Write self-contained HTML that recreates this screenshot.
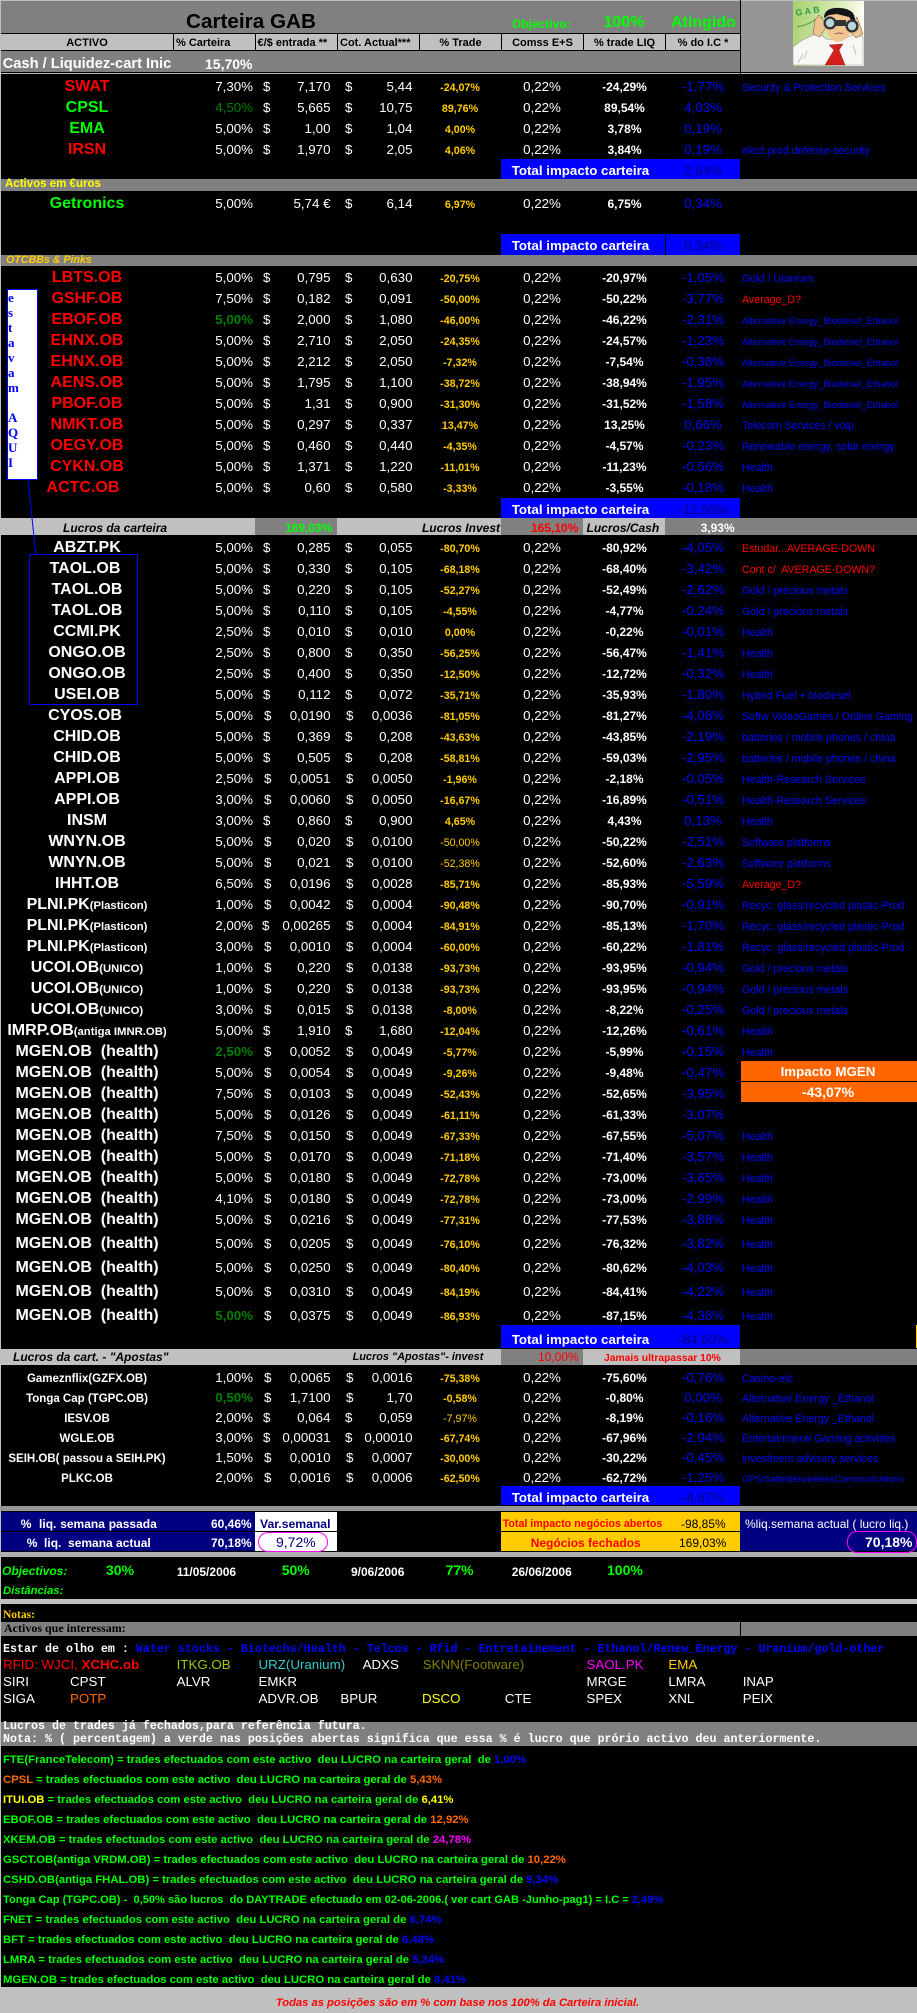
<!DOCTYPE html>
<html><head><meta charset="utf-8"><title>Carteira GAB</title>
<style>
html,body{margin:0;padding:0}
body{position:relative;width:917px;height:2010px;background:#c0c0c0;overflow:hidden;font-family:"Liberation Sans",Arial,sans-serif;color:#fff}
.a{position:absolute}
.t{position:absolute;white-space:pre;line-height:20px}
.c{text-align:center}
.bd{font-weight:bold}
.r{position:absolute;left:0;width:917px;display:grid;grid-template-columns:174px 79px 19px 58.5px 24.5px 57.5px 95px 69px 96px 61px 183.5px;align-items:baseline;padding-top:3px;white-space:pre}
.r i{font-style:normal;font-size:13.33px;line-height:16px;display:block;position:relative}
.r i:nth-child(1){font-size:16px;font-weight:bold;text-align:center}
.r i:nth-child(2),.r i:nth-child(4),.r i:nth-child(6){text-align:right}
.r i:nth-child(3){padding-left:10px}
.r i:nth-child(5){padding-left:14.5px}
.w i:nth-child(3){padding-left:11px}
.w i:nth-child(5){padding-left:15.5px}
.r i:nth-child(7){font-size:10.67px;font-weight:bold;color:#fc0;text-align:center}
.r i:nth-child(8){text-align:center}
.r i:nth-child(9){font-size:12px;font-weight:bold;text-align:center}
.r i:nth-child(10){color:#00f;text-align:center}
.r i:nth-child(11){font-size:10.67px;color:#00f;padding-left:8.5px}
.r i.R{color:#f00}
.r i.G{color:#0f0}
.r i.g{color:#008000;font-weight:bold}
.r i.gn{color:#008000}
.r i.q{color:#f00}
.r i.n9{font-size:9.33px}
.r i.nb{font-weight:normal}
.r small{font-size:11.3px}
.s{padding-top:4px}
.s i:nth-child(1){font-size:11.5px}
.tl{left:511.7px;font-size:13.33px;font-weight:bold;color:#fff}
.tv{left:666px;width:74px;text-align:center;font-size:13.33px;color:#000080}
.h{font-size:11px;font-weight:bold;color:#000;top:33px}
.lc{font-size:12px;font-weight:bold;font-style:italic;color:#000}
.sym{font-size:13.33px}
.m{font-family:"Liberation Mono",monospace;font-size:11.67px;font-weight:bold}
.gl{left:3px;font-size:11.3px;font-weight:bold;color:#0f0}
.b{color:#00f}.o{color:#f60}.y{color:#ff0}.p{color:#f0f}
</style></head><body>

<!-- top header -->
<div class="a" style="left:1px;top:1px;width:739px;height:71px;background:#808080"></div>
<div class="a" style="left:741px;top:1px;width:176px;height:71px;background:#969696"></div>
<div class="a" style="left:1px;top:34px;width:739px;height:16px;background:#c0c0c0"></div>
<div class="a" style="left:1px;top:33px;width:739px;height:1px;background:#000"></div>
<div class="a" style="left:1px;top:50px;width:739px;height:1px;background:#000"></div>
<div class="a" style="left:173px;top:34px;width:1px;height:16px;background:#000"></div>
<div class="a" style="left:255px;top:34px;width:1px;height:16px;background:#000"></div>
<div class="a" style="left:337px;top:34px;width:1px;height:16px;background:#000"></div>
<div class="a" style="left:419px;top:34px;width:1px;height:16px;background:#000"></div>
<div class="a" style="left:501px;top:34px;width:1px;height:16px;background:#000"></div>
<div class="a" style="left:583px;top:34px;width:1px;height:16px;background:#000"></div>
<div class="a" style="left:665px;top:34px;width:1px;height:16px;background:#000"></div>
<div class="a" style="left:740px;top:0;width:1px;height:74px;background:#000"></div>
<div class="a" style="left:1px;top:72px;width:916px;height:1px;background:#000"></div>
<div class="a" style="left:1px;top:74px;width:916px;height:1913px;background:#000"></div>

<div class="t bd" style="left:186px;top:12px;font-size:20.7px;color:#000">Carteira GAB</div>
<div class="t bd" style="left:512px;top:14px;font-size:12px;color:#0f0">Objectivo:</div>
<div class="t bd" style="left:603.5px;top:12.5px;font-size:16px;color:#0f0">100%</div>
<div class="t bd" style="left:671px;top:12.5px;font-size:16px;color:#0f0">Atingido</div>

<div class="t h c" style="left:1px;width:172px">ACTIVO</div>
<div class="t h" style="left:176px">% Carteira</div>
<div class="t h" style="left:257.5px">€/$ entrada **</div>
<div class="t h" style="left:340px">Cot. Actual***</div>
<div class="t h c" style="left:420px;width:81px">% Trade</div>
<div class="t h c" style="left:502px;width:81px">Comss E+S</div>
<div class="t h c" style="left:584px;width:81px">% trade LIQ</div>
<div class="t h c" style="left:666px;width:74px">% do I.C *</div>

<div class="t bd" style="left:2.7px;top:54px;font-size:14.67px">Cash / Liquidez-cart Inic</div>
<div class="t bd" style="left:205px;top:54px;font-size:14px">15,70%</div>

<!-- portrait -->
<svg class="a" style="left:793px;top:1px" width="71" height="65" viewBox="0 0 71 65">
<defs><linearGradient id="bg" x1="0" y1="0" x2="1" y2="0.2"><stop offset="0" stop-color="#a6cf6c"/><stop offset="0.6" stop-color="#d6eab0"/><stop offset="1" stop-color="#fdfdf5"/></linearGradient></defs>
<rect width="71" height="65" fill="url(#bg)"/>
<text x="3" y="15" font-family="Liberation Sans,sans-serif" font-size="9" font-weight="bold" fill="#2f9a45" transform="rotate(-9 3 15)">G A B</text>
<path d="M4 26Q14 24 20 20T30 17" fill="none" stroke="#3aa04a" stroke-width="1"/>
<path d="M0 64V46L8 40 20 34 27 33 33 38 48 40 55 36 62 33 70 36V64Z" fill="#f7f7f4" stroke="#9b9b96" stroke-width=".6"/>
<path d="M5 62l5-9M14 50l-3 8M60 44l3 10" stroke="#b5b5b0" stroke-width=".8" fill="none"/>
<path d="M26 14L22 19 20 33 27 36 34 24Z" fill="#efc390" stroke="#6a4a30" stroke-width=".5"/>
<path d="M64 16L70 33 63 37 56 30Z" fill="#efc390" stroke="#6a4a30" stroke-width=".5"/>
<path d="M31 20Q33 38 44 41 56 40 60 26L56 12 35 12Z" fill="#f0c592"/>
<path d="M31 17Q31 8 42 7 54 6 60 12 63 17 62 24L56 16 44 13 36 14Z" fill="#151515"/>
<circle cx="37" cy="22" r="6.5" fill="#2e3335"/><circle cx="37" cy="22" r="4.2" fill="#b8d4dc"/>
<circle cx="59" cy="25" r="6.5" fill="#2e3335"/><circle cx="59" cy="25" r="4.2" fill="#b8d4dc"/>
<rect x="43" y="19" width="10" height="6" fill="#2e3335"/>
<path d="M42 33Q46 31 50 33" stroke="#6a4a30" stroke-width=".7" fill="none"/>
<path d="M36 44L50 43 46 49 52 64H32L41 49Z" fill="#d4211c" stroke="#7a1510" stroke-width=".4"/>
</svg>

<!-- bands -->
<div class="a" style="left:501px;top:159px;width:239px;height:20px;background:#00f"></div>
<div class="t tl" style="top:161.4px">Total impacto carteira</div><div class="t tv" style="top:161.4px">2,64%</div>
<div class="a" style="left:1px;top:179px;width:916px;height:12px;background:#808080"></div>
<div class="t bd" style="left:5px;top:173.7px;font-size:11.5px;color:#ff0">Activos em €uros</div>
<div class="a" style="left:501px;top:234px;width:239px;height:21px;background:#00f"></div>
<div class="a" style="left:665px;top:234px;width:1px;height:21px;background:#000"></div>
<div class="t tl" style="top:236.4px">Total impacto carteira</div><div class="t tv" style="top:236.4px">0,34%</div>
<div class="a" style="left:1px;top:255px;width:916px;height:11px;background:#808080"></div>
<div class="t bd" style="left:6px;top:250.3px;font-size:10.67px;font-style:italic;color:#fc0">OTCBBs &amp; Pinks</div>

<div class="a" style="left:501px;top:498px;width:239px;height:20px;background:#00f"></div>
<div class="t tl" style="top:500.4px">Total impacto carteira</div><div class="t tv" style="top:500.4px">-12,56%</div>

<div class="a" style="left:0;top:518px;width:917px;height:17px;background:#c0c0c0"></div>
<div class="a" style="left:255px;top:518px;width:82px;height:17px;background:#808080"></div>
<div class="a" style="left:501px;top:518px;width:82px;height:17px;background:#808080"></div>
<div class="a" style="left:665px;top:518px;width:252px;height:17px;background:#808080"></div>
<div class="t lc" style="left:63px;top:517.5px">Lucros da carteira</div>
<div class="t bd" style="left:285px;top:517.5px;font-size:12px;color:#0f0">169,03%</div>
<div class="t lc" style="left:420px;width:80px;text-align:right;top:517.5px">Lucros Invest</div>
<div class="t bd" style="left:531px;top:517.5px;font-size:12px;color:#f00">165,10%</div>
<div class="t lc" style="left:586.5px;top:517.5px">Lucros/Cash</div>
<div class="t bd" style="left:700.6px;top:517.5px;font-size:12px">3,93%</div>

<div class="a" style="left:501px;top:1325px;width:239px;height:23px;background:#00f"></div>
<div class="t tl" style="top:1330.4px">Total impacto carteira</div><div class="t tv" style="top:1330.4px">-84,60%</div>
<div class="a" style="left:916px;top:1325px;width:1px;height:23px;background:#fc0"></div>

<div class="a" style="left:0;top:1349px;width:917px;height:16px;background:#c0c0c0"></div>
<div class="a" style="left:501px;top:1349px;width:82px;height:16px;background:#808080"></div>
<div class="a" style="left:740px;top:1349px;width:177px;height:16px;background:#808080"></div>
<div class="t lc" style="left:13px;top:1346.5px;font-size:12px">Lucros da cart. - "Apostas"</div>
<div class="t lc" style="left:352.6px;top:1347.3px;font-size:10.9px">Lucros "Apostas"- invest</div>
<div class="t" style="left:538px;top:1346.8px;font-size:12px;color:#f00">10,00%</div>
<div class="t bd" style="left:604px;top:1349px;font-size:10.3px;color:#f00">Jamais ultrapassar 10%</div>

<div class="a" style="left:501px;top:1486px;width:239px;height:19px;background:#00f"></div>
<div class="t tl" style="top:1488.4px">Total impacto carteira</div><div class="t tv" style="top:1488.4px">-4,67%</div>

<div class="a" style="left:0;top:1506px;width:917px;height:5px;background:#969696"></div>
<div class="a" style="left:1px;top:1512px;width:254px;height:39px;background:#000080"></div>
<div class="a" style="left:255px;top:1512px;width:82px;height:39px;background:#fff"></div>
<div class="a" style="left:501px;top:1512px;width:239px;height:39px;background:#fc0"></div>
<div class="a" style="left:740px;top:1512px;width:177px;height:39px;background:#000080"></div>
<div class="a" style="left:1px;top:1531px;width:336px;height:1px;background:#000"></div>
<div class="a" style="left:501px;top:1531px;width:239px;height:1px;background:#000"></div>
<div class="a" style="left:0;top:1552px;width:917px;height:5px;background:#b0b0b0"></div>

<div class="t bd" style="left:20.7px;top:1513.5px;font-size:12px;word-spacing:.5px">%  liq. semana passada</div>
<div class="t bd" style="left:26.7px;top:1532.5px;font-size:12px">%  liq.  semana actual</div>
<div class="t bd" style="left:170px;width:81.7px;text-align:right;top:1513.5px;font-size:12px">60,46%</div>
<div class="t bd" style="left:170px;width:81.7px;text-align:right;top:1532.5px;font-size:12px">70,18%</div>
<div class="t bd" style="left:260px;top:1513.5px;font-size:12.2px;color:#000080">Var.semanal</div>
<div class="a" style="left:258px;top:1532px;width:68px;height:18px;border:1px solid #f0f;border-radius:10px"></div>
<div class="t" style="left:276px;top:1532px;font-size:14px;color:#000080">9,72%</div>

<div class="t bd" style="left:502.7px;top:1514.3px;font-size:10.67px;color:#f00">Total impacto negócios abertos</div>
<div class="t" style="left:681px;top:1513.5px;font-size:12px;color:#000">-98,85%</div>
<div class="t bd" style="left:530.7px;top:1532.5px;font-size:12px;color:#f00">Negócios fechados</div>
<div class="t" style="left:679px;top:1532.5px;font-size:12px;color:#000">169,03%</div>
<div class="t" style="left:745px;top:1513.5px;font-size:12px">%liq.semana actual ( lucro liq.)</div>
<div class="a" style="left:846.7px;top:1531px;width:68px;height:20px;border:1px solid #f0f;border-radius:10px"></div>
<div class="t bd" style="left:865px;top:1532px;font-size:14px">70,18%</div>

<div class="t bd" style="left:2px;top:1561px;font-size:12px;font-style:italic;color:#0f0">Objectivos:</div>
<div class="t bd" style="left:3px;top:1581px;font-size:11.3px;font-style:italic;color:#0f0">Distâncias:</div>
<div class="t bd" style="left:106px;top:1560px;font-size:14px;color:#0f0">30%</div>
<div class="t bd" style="left:176.7px;top:1562px;font-size:12px">11/05/2006</div>
<div class="t bd" style="left:281.7px;top:1560px;font-size:14px;color:#0f0">50%</div>
<div class="t bd" style="left:351px;top:1562px;font-size:12px">9/06/2006</div>
<div class="t bd" style="left:445.6px;top:1560px;font-size:14px;color:#0f0">77%</div>
<div class="t bd" style="left:511.7px;top:1562px;font-size:12px">26/06/2006</div>
<div class="t bd" style="left:607px;top:1560px;font-size:14px;color:#0f0">100%</div>

<div class="a" style="left:0;top:1599px;width:917px;height:5px;background:#c0c0c0"></div>
<div class="t bd" style="left:3px;top:1605px;font-size:11.5px;font-family:'Liberation Serif',serif;color:#fc0">Notas:</div>
<div class="a" style="left:1px;top:1622px;width:916px;height:14px;background:#808080"></div>
<div class="a" style="left:740px;top:1622px;width:1px;height:14px;background:#000"></div>
<div class="t bd" style="left:4px;top:1618px;font-size:12px;font-family:'Liberation Serif',serif;color:#000">Activos que interessam:</div>
<div class="t m" style="left:3px;top:1639px">Estar de olho em : <span class="b">Water stocks - Biotechs/Health - Telcos - Rfid - Entretainement - Ethanol/Renew_Energy - Uranium/gold-other</span></div>

<div class="t sym" style="left:3px;top:1655px;color:#f00">RFID: WJCI, <b>XCHC.ob</b></div>
<div class="t sym" style="left:176.6px;top:1655px;color:#9c0">ITKG.OB</div>
<div class="t sym" style="left:258.5px;top:1655px;color:#3cc">URZ(Uranium)</div>
<div class="t sym" style="left:362.6px;top:1655px">ADXS</div>
<div class="t sym" style="left:422.8px;top:1655px;color:#808000">SKNN(Footware)</div>
<div class="t sym" style="left:586.5px;top:1655px;color:#f0f">SAOL.PK</div>
<div class="t sym" style="left:668.4px;top:1655px;color:#fc0">EMA</div>
<div class="t sym" style="left:3px;top:1672px">SIRI</div>
<div class="t sym" style="left:70px;top:1672px">CPST</div>
<div class="t sym" style="left:176.6px;top:1672px">ALVR</div>
<div class="t sym" style="left:258.5px;top:1672px">EMKR</div>
<div class="t sym" style="left:586.5px;top:1672px">MRGE</div>
<div class="t sym" style="left:668.4px;top:1672px">LMRA</div>
<div class="t sym" style="left:742.7px;top:1672px">INAP</div>
<div class="t sym" style="left:3px;top:1689px">SIGA</div>
<div class="t sym" style="left:70px;top:1689px;color:#f60">POTP</div>
<div class="t sym" style="left:258.5px;top:1689px">ADVR.OB</div>
<div class="t sym" style="left:340.4px;top:1689px">BPUR</div>
<div class="t sym" style="left:422px;top:1689px;color:#ff0">DSCO</div>
<div class="t sym" style="left:504.7px;top:1689px">CTE</div>
<div class="t sym" style="left:586.5px;top:1689px">SPEX</div>
<div class="t sym" style="left:668.4px;top:1689px">XNL</div>
<div class="t sym" style="left:742.7px;top:1689px">PEIX</div>

<div class="a" style="left:1px;top:1722px;width:916px;height:24px;background:#808080"></div>
<div class="t m" style="left:3px;top:1716px">Lucros de trades já fechados,para referência futura.</div>
<div class="t m" style="left:3px;top:1729px">Nota: % ( percentagem) a verde nas posições abertas significa que essa % é lucro que prório activo deu anteriormente.</div>

<div class="t gl" style="top:1750px">FTE(FranceTelecom) = trades efectuados com este activo  deu LUCRO na carteira geral  de <span class="b">1,00%</span></div>
<div class="t gl" style="top:1770px"><span class="o">CPSL</span> = trades efectuados com este activo  deu LUCRO na carteira geral de <span class="o">5,43%</span></div>
<div class="t gl" style="top:1790px"><span class="y">ITUI.OB</span> = trades efectuados com este activo  deu LUCRO na carteira geral de <span class="y">6,41%</span></div>
<div class="t gl" style="top:1810px">EBOF.OB = trades efectuados com este activo  deu LUCRO na carteira geral de <span class="o">12,92%</span></div>
<div class="t gl" style="top:1830px">XKEM.OB = trades efectuados com este activo  deu LUCRO na carteira geral de <span class="p">24,78%</span></div>
<div class="t gl" style="top:1850px">GSCT.OB(antiga VRDM.OB) = trades efectuados com este activo  deu LUCRO na carteira geral de <span class="o">10,22%</span></div>
<div class="t gl" style="top:1870px">CSHD.OB(antiga FHAL.OB) = trades efectuados com este activo  deu LUCRO na carteira geral de <span class="b">9,34%</span></div>
<div class="t gl" style="top:1890px;font-size:11.1px">Tonga Cap (TGPC.OB) -  0,50% são lucros  do DAYTRADE efectuado em 02-06-2006.( ver cart GAB -Junho-pag1) = I.C = <span class="b">2,49%</span></div>
<div class="t gl" style="top:1910px">FNET = trades efectuados com este activo  deu LUCRO na carteira geral de <span class="b">6,74%</span></div>
<div class="t gl" style="top:1930px">BFT = trades efectuados com este activo  deu LUCRO na carteira geral de <span class="b">6,48%</span></div>
<div class="t gl" style="top:1950px">LMRA = trades efectuados com este activo  deu LUCRO na carteira geral de <span class="b">5,34%</span></div>
<div class="t gl" style="top:1970px">MGEN.OB = trades efectuados com este activo  deu LUCRO na carteira geral de <span class="b">8,41%</span></div>

<div class="t bd c" style="left:0;width:915px;top:1993px;font-size:11.2px;font-style:italic;color:#f00">Todas as posições são em % com base nos 100% da Carteira inicial.</div>

<!-- orange panel -->
<div class="a" style="left:741px;top:1061px;width:176px;height:20px;background:#f60"></div>
<div class="a" style="left:741px;top:1082px;width:176px;height:20px;background:#f60"></div>
<div class="t bd c" style="left:741px;width:174px;top:1062.4px;font-size:13.33px">Impacto MGEN</div>
<div class="t bd c" style="left:741px;width:174px;top:1082px;font-size:14px">-43,07%</div>

<!-- rows -->
<div class="r" style="top:76px"><i class="R">SWAT</i><i>7,30%</i><i>$</i><i>7,170</i><i>$</i><i>5,44</i><i>-24,07%</i><i>0,22%</i><i>-24,29%</i><i>-1,77%</i><i>Security &amp; Protection Services</i></div>
<div class="r" style="top:97px"><i class="G">CPSL</i><i class="gn">4,50%</i><i>$</i><i>5,665</i><i>$</i><i>10,75</i><i>89,76%</i><i>0,22%</i><i>89,54%</i><i>4,03%</i><i></i></div>
<div class="r" style="top:118px"><i class="G">EMA</i><i>5,00%</i><i>$</i><i>1,00</i><i>$</i><i>1,04</i><i>4,00%</i><i>0,22%</i><i>3,78%</i><i>0,19%</i><i></i></div>
<div class="r" style="top:139px"><i class="R">IRSN</i><i>5,00%</i><i>$</i><i>1,970</i><i>$</i><i>2,05</i><i>4,06%</i><i>0,22%</i><i>3,84%</i><i>0,19%</i><i>elect.prod.defense-security</i></div>
<div class="r" style="top:193px"><i class="G">Getronics</i><i>5,00%</i><i></i><i>5,74 €</i><i>$</i><i>6,14</i><i>6,97%</i><i>0,22%</i><i>6,75%</i><i>0,34%</i><i></i></div>

<div class="r" style="top:267px"><i class="R">LBTS.OB</i><i>5,00%</i><i>$</i><i>0,795</i><i>$</i><i>0,630</i><i>-20,75%</i><i>0,22%</i><i>-20,97%</i><i>-1,05%</i><i>Gold / Uranium</i></div>
<div class="r" style="top:288px"><i class="R">GSHF.OB</i><i>7,50%</i><i>$</i><i>0,182</i><i>$</i><i>0,091</i><i>-50,00%</i><i>0,22%</i><i>-50,22%</i><i>-3,77%</i><i class="q">Average_D?</i></div>
<div class="r" style="top:309px"><i class="R">EBOF.OB</i><i class="g">5,00%</i><i>$</i><i>2,000</i><i>$</i><i>1,080</i><i>-46,00%</i><i>0,22%</i><i>-46,22%</i><i>-2,31%</i><i class="n9">Alternative Energy_Biodiesel_Ethanol</i></div>
<div class="r" style="top:330px"><i class="R">EHNX.OB</i><i>5,00%</i><i>$</i><i>2,710</i><i>$</i><i>2,050</i><i>-24,35%</i><i>0,22%</i><i>-24,57%</i><i>-1,23%</i><i class="n9">Alternative Energy_Biodiesel_Ethanol</i></div>
<div class="r" style="top:351px"><i class="R">EHNX.OB</i><i>5,00%</i><i>$</i><i>2,212</i><i>$</i><i>2,050</i><i>-7,32%</i><i>0,22%</i><i>-7,54%</i><i>-0,38%</i><i class="n9">Alternative Energy_Biodiesel_Ethanol</i></div>
<div class="r" style="top:372px"><i class="R">AENS.OB</i><i>5,00%</i><i>$</i><i>1,795</i><i>$</i><i>1,100</i><i>-38,72%</i><i>0,22%</i><i>-38,94%</i><i>-1,95%</i><i class="n9">Alternative Energy_Biodiesel_Ethanol</i></div>
<div class="r" style="top:393px"><i class="R">PBOF.OB</i><i>5,00%</i><i>$</i><i>1,31</i><i>$</i><i>0,900</i><i>-31,30%</i><i>0,22%</i><i>-31,52%</i><i>-1,58%</i><i class="n9">Alternative Energy_Biodiesel_Ethanol</i></div>
<div class="r" style="top:414px"><i class="R">NMKT.OB</i><i>5,00%</i><i>$</i><i>0,297</i><i>$</i><i>0,337</i><i>13,47%</i><i>0,22%</i><i>13,25%</i><i>0,66%</i><i>Telecom Services / voip</i></div>
<div class="r" style="top:435px"><i class="R">OEGY.OB</i><i>5,00%</i><i>$</i><i>0,460</i><i>$</i><i>0,440</i><i>-4,35%</i><i>0,22%</i><i>-4,57%</i><i>-0,23%</i><i>Renewable energy, solar energy</i></div>
<div class="r" style="top:456px"><i class="R">CYKN.OB</i><i>5,00%</i><i>$</i><i>1,371</i><i>$</i><i>1,220</i><i>-11,01%</i><i>0,22%</i><i>-11,23%</i><i>-0,56%</i><i>Health</i></div>
<div class="r" style="top:477px"><i class="R" style="left:-4px">ACTC.OB</i><i>5,00%</i><i>$</i><i>0,60</i><i>$</i><i>0,580</i><i>-3,33%</i><i>0,22%</i><i>-3,55%</i><i>-0,18%</i><i>Health</i></div>

<div class="r" style="top:537px"><i>ABZT.PK</i><i>5,00%</i><i>$</i><i>0,285</i><i>$</i><i>0,055</i><i>-80,70%</i><i>0,22%</i><i>-80,92%</i><i>-4,05%</i><i class="q">Estudar...AVERAGE-DOWN</i></div>
<div class="r" style="top:558px"><i style="left:-2px">TAOL.OB</i><i>5,00%</i><i>$</i><i>0,330</i><i>$</i><i>0,105</i><i>-68,18%</i><i>0,22%</i><i>-68,40%</i><i>-3,42%</i><i class="q">Cont c/  AVERAGE-DOWN?</i></div>
<div class="r" style="top:579px"><i>TAOL.OB</i><i>5,00%</i><i>$</i><i>0,220</i><i>$</i><i>0,105</i><i>-52,27%</i><i>0,22%</i><i>-52,49%</i><i>-2,62%</i><i>Gold / precious metals</i></div>
<div class="r" style="top:600px"><i>TAOL.OB</i><i>5,00%</i><i>$</i><i>0,110</i><i>$</i><i>0,105</i><i>-4,55%</i><i>0,22%</i><i>-4,77%</i><i>-0,24%</i><i>Gold / precious metals</i></div>
<div class="r" style="top:621px"><i>CCMI.PK</i><i>2,50%</i><i>$</i><i>0,010</i><i>$</i><i>0,010</i><i>0,00%</i><i>0,22%</i><i>-0,22%</i><i>-0,01%</i><i>Health</i></div>
<div class="r" style="top:642px"><i>ONGO.OB</i><i>2,50%</i><i>$</i><i>0,800</i><i>$</i><i>0,350</i><i>-56,25%</i><i>0,22%</i><i>-56,47%</i><i>-1,41%</i><i>Health</i></div>
<div class="r" style="top:663px"><i>ONGO.OB</i><i>2,50%</i><i>$</i><i>0,400</i><i>$</i><i>0,350</i><i>-12,50%</i><i>0,22%</i><i>-12,72%</i><i>-0,32%</i><i>Health</i></div>
<div class="r" style="top:684px"><i>USEI.OB</i><i>5,00%</i><i>$</i><i>0,112</i><i>$</i><i>0,072</i><i>-35,71%</i><i>0,22%</i><i>-35,93%</i><i>-1,80%</i><i>Hybrid Fuel + biodiesel</i></div>
<div class="r w" style="top:705px"><i style="left:-2px">CYOS.OB</i><i>5,00%</i><i>$</i><i>0,0190</i><i>$</i><i>0,0036</i><i>-81,05%</i><i>0,22%</i><i>-81,27%</i><i>-4,06%</i><i>Softw VideoGames / Online Gaming</i></div>
<div class="r" style="top:726px"><i>CHID.OB</i><i>5,00%</i><i>$</i><i>0,369</i><i>$</i><i>0,208</i><i>-43,63%</i><i>0,22%</i><i>-43,85%</i><i>-2,19%</i><i>batteries / mobile phones / china</i></div>
<div class="r" style="top:747px"><i>CHID.OB</i><i>5,00%</i><i>$</i><i>0,505</i><i>$</i><i>0,208</i><i>-58,81%</i><i>0,22%</i><i>-59,03%</i><i>-2,95%</i><i>batteries / mobile phones / china</i></div>
<div class="r w" style="top:768px"><i>APPI.OB</i><i>2,50%</i><i>$</i><i>0,0051</i><i>$</i><i>0,0050</i><i>-1,96%</i><i>0,22%</i><i>-2,18%</i><i>-0,05%</i><i>Health-Research Services</i></div>
<div class="r w" style="top:789px"><i>APPI.OB</i><i>3,00%</i><i>$</i><i>0,0060</i><i>$</i><i>0,0050</i><i>-16,67%</i><i>0,22%</i><i>-16,89%</i><i>-0,51%</i><i>Health-Research Services</i></div>
<div class="r" style="top:810px"><i>INSM</i><i>3,00%</i><i>$</i><i>0,860</i><i>$</i><i>0,900</i><i>4,65%</i><i>0,22%</i><i>4,43%</i><i>0,13%</i><i>Health</i></div>
<div class="r w" style="top:831px"><i>WNYN.OB</i><i>5,00%</i><i>$</i><i>0,020</i><i>$</i><i>0,0100</i><i class="nb">-50,00%</i><i>0,22%</i><i>-50,22%</i><i>-2,51%</i><i>Software platforms</i></div>
<div class="r w" style="top:852px"><i>WNYN.OB</i><i>5,00%</i><i>$</i><i>0,021</i><i>$</i><i>0,0100</i><i class="nb">-52,38%</i><i>0,22%</i><i>-52,60%</i><i>-2,63%</i><i>Software platforms</i></div>
<div class="r w" style="top:873px"><i>IHHT.OB</i><i>6,50%</i><i>$</i><i>0,0196</i><i>$</i><i>0,0028</i><i>-85,71%</i><i>0,22%</i><i>-85,93%</i><i>-5,59%</i><i class="q">Average_D?</i></div>
<div class="r w" style="top:894px"><i>PLNI.PK<small>(Plasticon)</small></i><i>1,00%</i><i>$</i><i>0,0042</i><i>$</i><i>0,0004</i><i>-90,48%</i><i>0,22%</i><i>-90,70%</i><i>-0,91%</i><i>Recyc. glass/recycled plastic-Prod</i></div>
<div class="r w" style="top:915px"><i>PLNI.PK<small>(Plasticon)</small></i><i>2,00%</i><i style="padding-left:9px">$</i><i>0,00265</i><i>$</i><i>0,0004</i><i>-84,91%</i><i>0,22%</i><i>-85,13%</i><i>-1,70%</i><i>Recyc. glass/recycled plastic-Prod</i></div>
<div class="r w" style="top:936px"><i>PLNI.PK<small>(Plasticon)</small></i><i>3,00%</i><i>$</i><i>0,0010</i><i>$</i><i>0,0004</i><i>-60,00%</i><i>0,22%</i><i>-60,22%</i><i>-1,81%</i><i>Recyc. glass/recycled plastic-Prod</i></div>
<div class="r w" style="top:957px"><i>UCOI.OB<small>(UNICO)</small></i><i>1,00%</i><i>$</i><i>0,220</i><i>$</i><i>0,0138</i><i>-93,73%</i><i>0,22%</i><i>-93,95%</i><i>-0,94%</i><i>Gold / precious metals</i></div>
<div class="r w" style="top:978px"><i>UCOI.OB<small>(UNICO)</small></i><i>1,00%</i><i>$</i><i>0,220</i><i>$</i><i>0,0138</i><i>-93,73%</i><i>0,22%</i><i>-93,95%</i><i>-0,94%</i><i>Gold / precious metals</i></div>
<div class="r w" style="top:999px"><i>UCOI.OB<small>(UNICO)</small></i><i>3,00%</i><i>$</i><i>0,015</i><i>$</i><i>0,0138</i><i>-8,00%</i><i>0,22%</i><i>-8,22%</i><i>-0,25%</i><i>Gold / precious metals</i></div>
<div class="r" style="top:1020px"><i>IMRP.OB<small>(antiga IMNR.OB)</small></i><i>5,00%</i><i>$</i><i>1,910</i><i>$</i><i>1,680</i><i>-12,04%</i><i>0,22%</i><i>-12,26%</i><i>-0,61%</i><i>Health</i></div>
<div class="r w" style="top:1041px"><i>MGEN.OB  (health)</i><i class="g">2,50%</i><i>$</i><i>0,0052</i><i>$</i><i>0,0049</i><i>-5,77%</i><i>0,22%</i><i>-5,99%</i><i>-0,15%</i><i>Health</i></div>
<div class="r w" style="top:1062px"><i>MGEN.OB  (health)</i><i>5,00%</i><i>$</i><i>0,0054</i><i>$</i><i>0,0049</i><i>-9,26%</i><i>0,22%</i><i>-9,48%</i><i>-0,47%</i><i></i></div>
<div class="r w" style="top:1083px"><i>MGEN.OB  (health)</i><i>7,50%</i><i>$</i><i>0,0103</i><i>$</i><i>0,0049</i><i>-52,43%</i><i>0,22%</i><i>-52,65%</i><i>-3,95%</i><i></i></div>
<div class="r w" style="top:1104px"><i>MGEN.OB  (health)</i><i>5,00%</i><i>$</i><i>0,0126</i><i>$</i><i>0,0049</i><i>-61,11%</i><i>0,22%</i><i>-61,33%</i><i>-3,07%</i><i></i></div>
<div class="r w" style="top:1125px"><i>MGEN.OB  (health)</i><i>7,50%</i><i>$</i><i>0,0150</i><i>$</i><i>0,0049</i><i>-67,33%</i><i>0,22%</i><i>-67,55%</i><i>-5,07%</i><i>Health</i></div>
<div class="r w" style="top:1146px"><i>MGEN.OB  (health)</i><i>5,00%</i><i>$</i><i>0,0170</i><i>$</i><i>0,0049</i><i>-71,18%</i><i>0,22%</i><i>-71,40%</i><i>-3,57%</i><i>Health</i></div>
<div class="r w" style="top:1167px"><i>MGEN.OB  (health)</i><i>5,00%</i><i>$</i><i>0,0180</i><i>$</i><i>0,0049</i><i>-72,78%</i><i>0,22%</i><i>-73,00%</i><i>-3,65%</i><i>Health</i></div>
<div class="r w" style="top:1188px"><i>MGEN.OB  (health)</i><i>4,10%</i><i>$</i><i>0,0180</i><i>$</i><i>0,0049</i><i>-72,78%</i><i>0,22%</i><i>-73,00%</i><i>-2,99%</i><i>Health</i></div>
<div class="r w" style="top:1209px"><i>MGEN.OB  (health)</i><i>5,00%</i><i>$</i><i>0,0216</i><i>$</i><i>0,0049</i><i>-77,31%</i><i>0,22%</i><i>-77,53%</i><i>-3,88%</i><i>Health</i></div>
<div class="r w" style="top:1233px"><i>MGEN.OB  (health)</i><i>5,00%</i><i>$</i><i>0,0205</i><i>$</i><i>0,0049</i><i>-76,10%</i><i>0,22%</i><i>-76,32%</i><i>-3,82%</i><i>Health</i></div>
<div class="r w" style="top:1257px"><i>MGEN.OB  (health)</i><i>5,00%</i><i>$</i><i>0,0250</i><i>$</i><i>0,0049</i><i>-80,40%</i><i>0,22%</i><i>-80,62%</i><i>-4,03%</i><i>Health</i></div>
<div class="r w" style="top:1281px"><i>MGEN.OB  (health)</i><i>5,00%</i><i>$</i><i>0,0310</i><i>$</i><i>0,0049</i><i>-84,19%</i><i>0,22%</i><i>-84,41%</i><i>-4,22%</i><i>Health</i></div>
<div class="r w" style="top:1305px"><i>MGEN.OB  (health)</i><i class="g">5,00%</i><i>$</i><i>0,0375</i><i>$</i><i>0,0049</i><i>-86,93%</i><i>0,22%</i><i>-87,15%</i><i>-4,36%</i><i>Health</i></div>

<div class="r s w" style="top:1366px"><i>Gameznflix(GZFX.OB)</i><i>1,00%</i><i>$</i><i>0,0065</i><i>$</i><i>0,0016</i><i>-75,38%</i><i>0,22%</i><i>-75,60%</i><i>-0,76%</i><i>Casino-etc</i></div>
<div class="r s w" style="top:1386px"><i>Tonga Cap (TGPC.OB)</i><i class="g">0,50%</i><i>$</i><i>1,7100</i><i>$</i><i>1,70</i><i>-0,58%</i><i>0,22%</i><i>-0,80%</i><i>0,00%</i><i>Alternative Energy _Ethanol</i></div>
<div class="r s" style="top:1406px"><i>IESV.OB</i><i>2,00%</i><i>$</i><i>0,064</i><i>$</i><i>0,059</i><i class="nb">-7,97%</i><i>0,22%</i><i>-8,19%</i><i>-0,16%</i><i>Alternative Energy _Ethanol</i></div>
<div class="r s" style="top:1426px"><i>WGLE.OB</i><i>3,00%</i><i>$</i><i>0,00031</i><i>$</i><i>0,00010</i><i>-67,74%</i><i>0,22%</i><i>-67,96%</i><i>-2,04%</i><i>Entertainment/ Gaming activities</i></div>
<div class="r s w" style="top:1446px"><i>SEIH.OB( passou a SEIH.PK)</i><i>1,50%</i><i>$</i><i>0,0010</i><i>$</i><i>0,0007</i><i>-30,00%</i><i>0,22%</i><i>-30,22%</i><i>-0,45%</i><i>investment advisory services</i></div>
<div class="r s w" style="top:1466px"><i>PLKC.OB</i><i>2,00%</i><i>$</i><i>0,0016</i><i>$</i><i>0,0006</i><i>-62,50%</i><i>0,22%</i><i>-62,72%</i><i>-1,25%</i><i class="n9">GPS/Sattelite/wirelessCommunications</i></div>

<!-- overlays -->
<div class="a" style="left:7px;top:289px;width:29px;height:189px;background:#fff;border:1px solid #00f"></div>
<div class="a" style="left:8px;top:290px;font:bold 13px/15px 'Liberation Serif',serif;color:#00f">e<br>s<br>t<br>a<br>v<br>a<br>m<br><br>A<br>Q<br>U<br>I</div>
<svg class="a" style="left:0;top:0" width="917" height="710"><path d="M28 479L35.7 554" stroke="#00f" stroke-width="1" fill="none"/></svg>
<div class="a" style="left:29px;top:554px;width:107px;height:149px;border:1px solid #00f"></div>

</body></html>
